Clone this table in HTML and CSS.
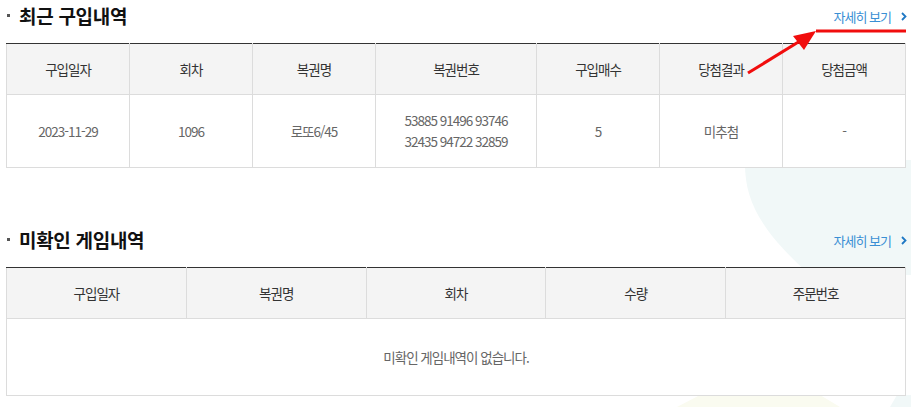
FILE: index.html
```html
<!DOCTYPE html>
<html lang="ko">
<head>
<meta charset="utf-8">
<link rel="stylesheet" href="styles.css">
</head>
<body>
<svg class="deco" width="911" height="407" viewBox="0 0 911 407" aria-hidden="true">
  <path d="M745 160 C744 200 760 230 810 275 L911 275 L911 160 Z" fill="#f1f8f8"/>
  <path d="M677 407 L700 395 L820 395 L840 407 Z" fill="#fafbf0"/>
  <path d="M890 407 L897 395 L911 395 L911 407 Z" fill="#f1f8f8"/>
</svg>

<section class="block">
  <div class="head">
    <h2 class="title">최근 구입내역</h2>
    <a class="more" href="#">자세히 보기<svg class="chev" width="6" height="9" viewBox="0 0 6 9"><path d="M1 1 L4.5 4.5 L1 8" fill="none" stroke="#1f78c4" stroke-width="1.8"/></svg></a>
  </div>
  <table class="grid grid7">
    <thead>
      <tr><th>구입일자</th><th>회차</th><th>복권명</th><th class="wide">복권번호</th><th>구입매수</th><th>당첨결과</th><th>당첨금액</th></tr>
    </thead>
    <tbody>
      <tr><td>2023-11-29</td><td>1096</td><td>로또6/45</td><td class="nums">53885 91496 93746<br>32435 94722 32859</td><td>5</td><td>미추첨</td><td>-</td></tr>
    </tbody>
  </table>
</section>

<section class="block second">
  <div class="head">
    <h2 class="title">미확인 게임내역</h2>
    <a class="more" href="#">자세히 보기<svg class="chev" width="6" height="9" viewBox="0 0 6 9"><path d="M1 1 L4.5 4.5 L1 8" fill="none" stroke="#1f78c4" stroke-width="1.8"/></svg></a>
  </div>
  <table class="grid grid5">
    <thead>
      <tr><th>구입일자</th><th>복권명</th><th>회차</th><th>수량</th><th>주문번호</th></tr>
    </thead>
    <tbody>
      <tr><td colspan="5" class="empty">미확인 게임내역이 없습니다.</td></tr>
    </tbody>
  </table>
</section>

<svg class="annot" width="911" height="407" viewBox="0 0 911 407" aria-hidden="true">
  <line x1="816" y1="31" x2="906" y2="31" stroke="#f10d0d" stroke-width="3"/>
  <line x1="748" y1="73" x2="800" y2="41" stroke="#f10d0d" stroke-width="3"/>
  <polygon points="816,31 793,36 804,50" fill="#f10d0d"/>
</svg>
</body>
</html>
```
FILE: styles.css
```css
html, body {
  margin: 0;
  padding: 0;
  background: #fff;
}
body {
  position: relative;
  width: 911px;
  height: 407px;
  overflow: hidden;
  padding: 0 5px 0 6px;
  box-sizing: border-box;
  font-family: "Noto Sans CJK KR", "Noto Sans", sans-serif;
  color: #333;
}
.deco {
  position: absolute;
  left: 0;
  top: 0;
  z-index: 0;
}
.annot {
  position: absolute;
  left: 0;
  top: 0;
  z-index: 5;
}
.block {
  position: relative;
  z-index: 1;
}
.second {
  margin-top: 56px;
}
.head {
  display: flex;
  justify-content: space-between;
  align-items: center;
  height: 30px;
  margin-bottom: 13px;
}
.second .head {
  margin-bottom: 13px;
}
.title {
  margin: 0;
  font-size: 19px;
  font-weight: 700;
  color: #111;
  letter-spacing: -0.3px;
  display: flex;
  align-items: center;
}
.title::before {
  content: "";
  width: 3px;
  height: 3px;
  background: #555;
  margin: 1px 9px 0 1px;
}
.more {
  font-size: 13px;
  color: #3a8fd4;
  text-decoration: none;
  letter-spacing: -1px;
  display: flex;
  align-items: center;
  margin-top: 2px;
}
.chev {
  margin-left: 10px;
  margin-right: -1px;
}
.grid {
  width: 100%;
  border-collapse: collapse;
  table-layout: fixed;
  background: #fff;
  border-top: 1px solid #333;
}
.grid th, .grid td {
  border: 1px solid #dcdcdc;
  text-align: center;
  font-size: 13.5px;
  letter-spacing: -1px;
  padding: 0;
}
.grid th {
  background: #f4f4f4;
  font-weight: 400;
  color: #333;
  height: 50px;
  border-top: 1px solid #333;
}
.grid td {
  color: #666;
  height: 72px;
}
.grid7 th.wide {
  width: 160px;
}
.nums {
  line-height: 21px;
}
.grid5 td.empty {
  height: 76px;
}
```
